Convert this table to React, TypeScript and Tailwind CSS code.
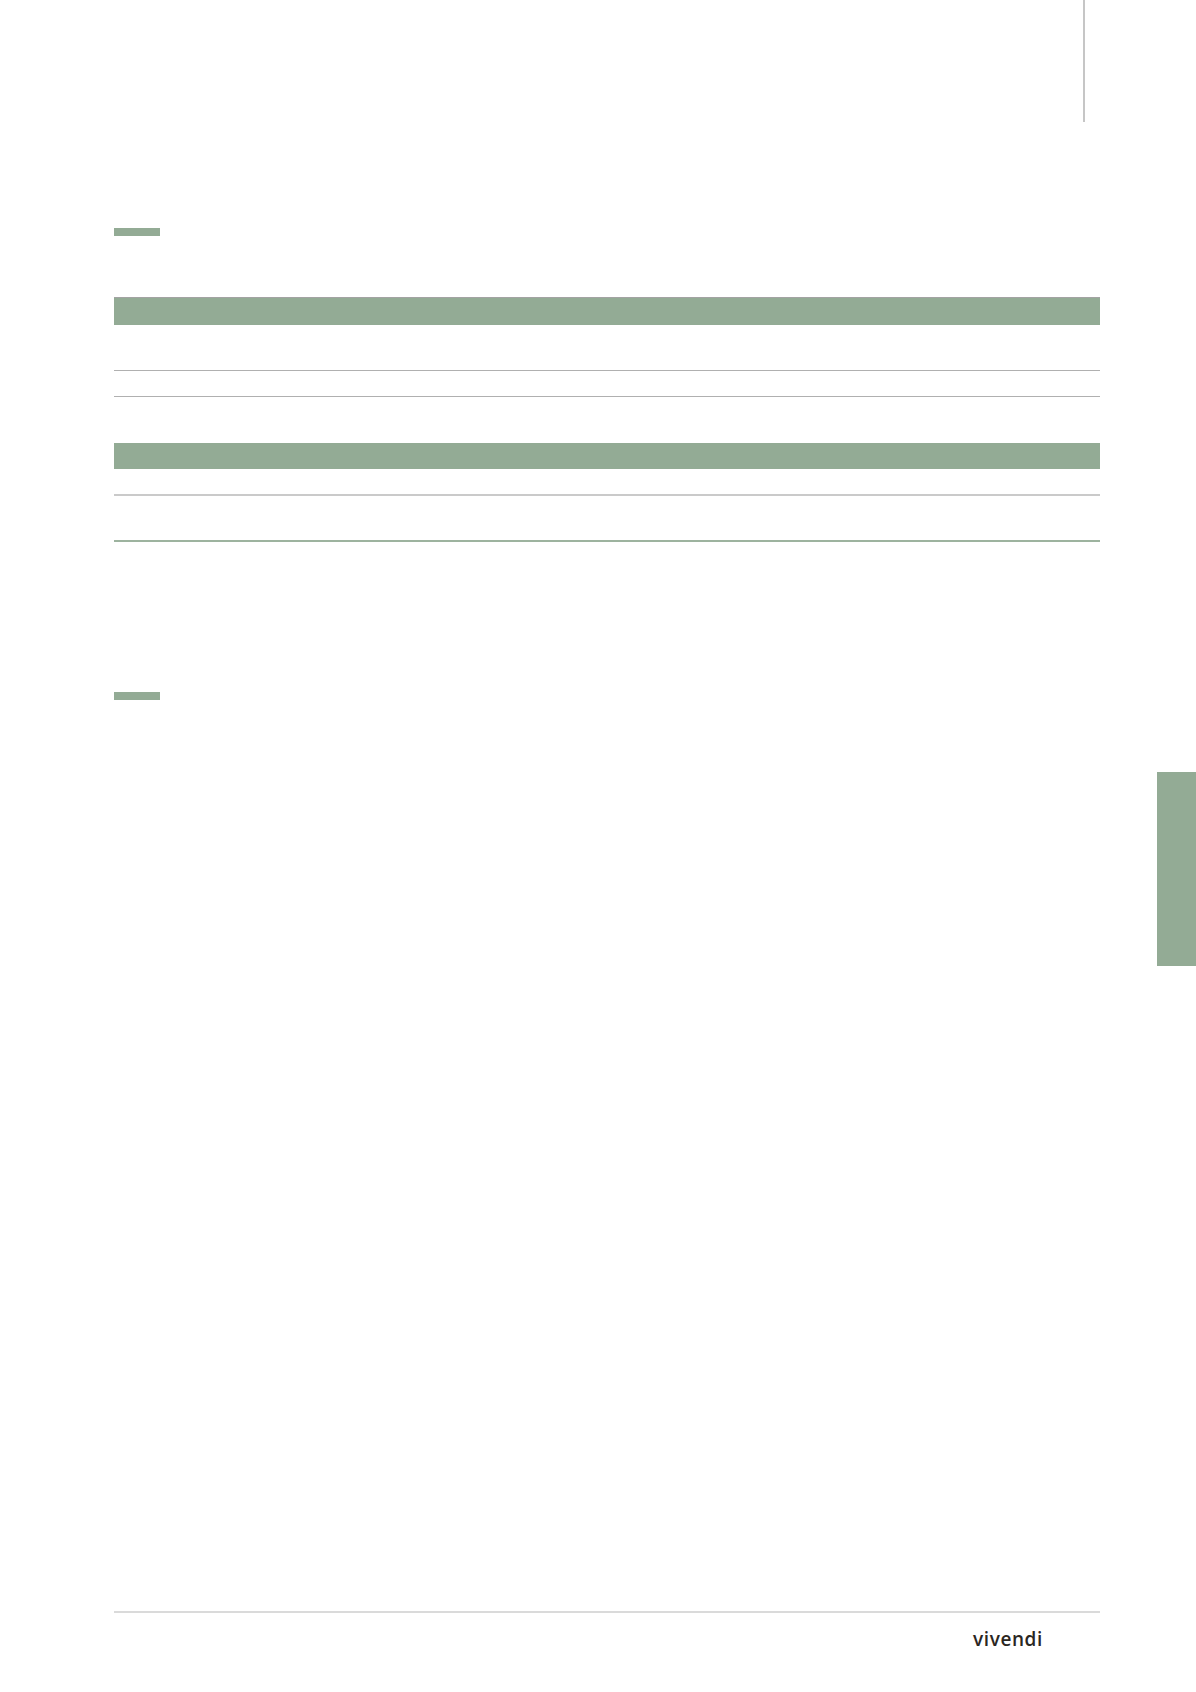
export default function App() {
  return (
    <div className="w-[1196px] h-[1692px] bg-white flex flex-col">
      {/* top margin rule */}
      <div className="h-[122px] flex pl-[1083px]">
        <div className="w-[2px] h-full bg-[#c6c6c6]" />
      </div>

      <div className="pl-[114px] pr-[96px] flex flex-col">
        <div className="mt-[106px] w-[46px] h-[8px] bg-[#93ab95]" />

        {/* table 1 */}
        <div className="mt-[61px] h-[28px] bg-[#93ab95] border-t border-[#a3a3a3]" />
        <div className="h-[45px]" />
        <div className="h-px bg-[#b0b0b0]" />
        <div className="h-[25px]" />
        <div className="h-px bg-[#b0b0b0]" />

        {/* table 2 */}
        <div className="mt-[46px] h-[26px] bg-[#93ab95]" />
        <div className="h-[25px]" />
        <div className="h-[2px] bg-[#cacaca]" />
        <div className="h-[44px]" />
        <div className="h-[2px] bg-[#9db39f]" />

        <div className="mt-[150px] w-[46px] h-[8px] bg-[#93ab95]" />
      </div>

      {/* side tab */}
      <div className="mt-[72px] flex justify-end">
        <div className="w-[39px] h-[194px] bg-[#93ab95]" />
      </div>

      {/* footer */}
      <div className="mt-[645px] pl-[114px] pr-[96px]">
        <div className="h-[1.5px] bg-[#dadada]" />
        <div className="flex pl-[859px] pt-[14px]">
          <span
            className="text-[19px] leading-[24px] font-semibold tracking-[0.6px] text-[#2b2622]"
            style={{ fontFamily: '"Open Sans", sans-serif' }}
          >
            vivendi
          </span>
        </div>
      </div>
    </div>
  )
}
